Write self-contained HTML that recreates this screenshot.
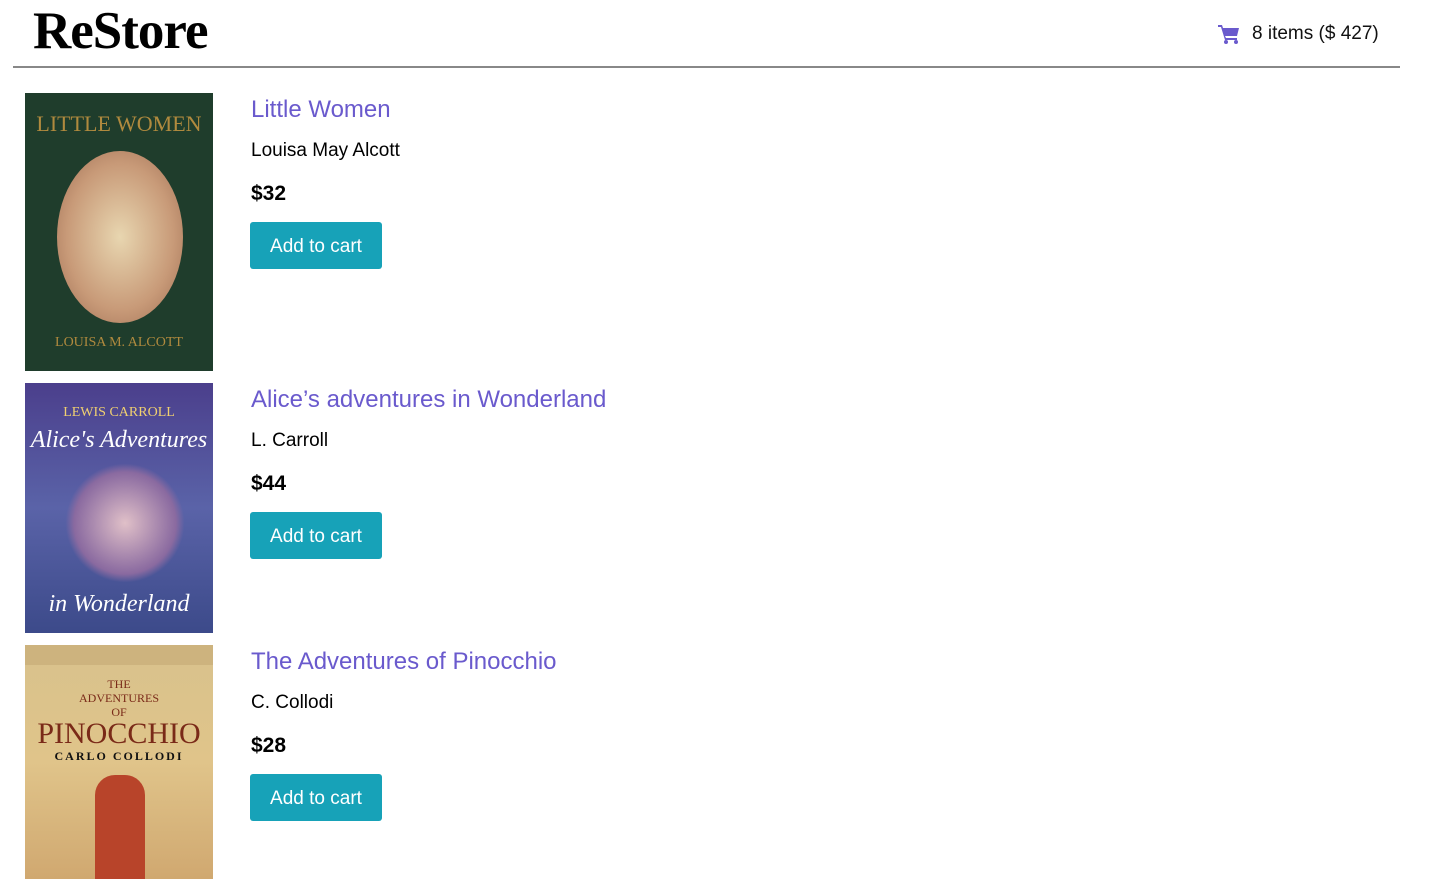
<!DOCTYPE html>
<html><head><style>
body{margin:0;width:1453px;height:879px;overflow:hidden;background:#fff;font-family:"Liberation Sans",sans-serif;position:relative}
.logo{position:absolute;left:33px;top:1px;font-family:"Liberation Serif",serif;font-weight:bold;font-size:53px;letter-spacing:-1px;color:#000}
.hr{position:absolute;left:13px;top:66px;width:1387px;height:2px;background:#888}
.cart{position:absolute;left:1218px;top:23px;font-size:19px;color:#111;display:flex;align-items:center}
.cart svg{margin-right:12px}
.cover{position:absolute;left:25px;width:188px;overflow:hidden}
.t{position:absolute;left:251px;font-size:24px;color:#6a5acd}
.a{position:absolute;left:251px;font-size:19px;color:#000}
.p{position:absolute;left:251px;font-size:21px;font-weight:bold;color:#000}
.b{position:absolute;left:250px;width:132px;height:47px;background:#17a2b8;color:#fff;border-radius:3px;font-size:19px;display:flex;align-items:center;justify-content:center;padding-top:2px;box-sizing:border-box}
.ct{position:absolute;width:100%;text-align:center;font-family:"Liberation Serif",serif}
</style></head><body>
<div class="logo">ReStore</div>
<div class="cart"><svg width="22" height="20" viewBox="0 0 22 20"><path d="M0 1h4l1 3h16l-2 8H7l1 2h11v2H7L3 3H0z" fill="#6a5acd"/><circle cx="8" cy="18" r="2" fill="#6a5acd"/><circle cx="18" cy="18" r="2" fill="#6a5acd"/></svg>8 items ($ 427)</div>
<div class="hr"></div>

<div class="cover" style="top:93px;height:278px;background:#1f3d2c">
<div class="ct" style="top:18px;color:#b08a3e;font-size:22px">LITTLE WOMEN</div>
<div style="position:absolute;left:32px;top:58px;width:126px;height:172px;border-radius:50%;background:radial-gradient(#e8d6b0,#c89a78 60%,#9a6a50)"></div>
<div class="ct" style="top:242px;color:#b08a3e;font-size:14px">LOUISA M. ALCOTT</div>
</div>
<div class="t" style="top:96px">Little Women</div>
<div class="a" style="top:140px">Louisa May Alcott</div>
<div class="p" style="top:182px">$32</div>
<div class="b" style="top:222px">Add to cart</div>

<div class="cover" style="top:383px;height:250px;background:linear-gradient(#4b3f8c,#5a63a8 50%,#3c4a8a)">
<div class="ct" style="top:22px;color:#f0d070;font-size:14px">LEWIS CARROLL</div>
<div class="ct" style="top:44px;color:#fff;font-size:24px;font-style:italic">Alice's Adventures</div>
<div style="position:absolute;left:40px;top:80px;width:120px;height:120px;background:radial-gradient(#e0c0c8,#8a6aa0 60%,transparent 70%)"></div>
<div class="ct" style="top:208px;color:#fff;font-size:24px;font-style:italic">in Wonderland</div>
</div>
<div class="t" style="top:386px">Alice’s adventures in Wonderland</div>
<div class="a" style="top:430px">L. Carroll</div>
<div class="p" style="top:472px">$44</div>
<div class="b" style="top:512px">Add to cart</div>

<div class="cover" style="top:645px;height:234px;background:linear-gradient(#d8c28c,#e0c48a 50%,#d0a870)">
<div style="position:absolute;left:0;top:0;width:188px;height:20px;background:#cdb37e"></div>
<div class="ct" style="top:32px;color:#7a2a18;font-size:12px;line-height:14px">THE<br>ADVENTURES<br>OF</div>
<div class="ct" style="top:72px;color:#7a2a18;font-size:30px">PINOCCHIO</div>
<div class="ct" style="top:104px;color:#111;font-size:12px;font-weight:bold;letter-spacing:2px">CARLO COLLODI</div>
<div style="position:absolute;left:70px;top:130px;width:50px;height:104px;background:#b8442a;border-radius:20px 20px 0 0"></div>
</div>
<div class="t" style="top:648px">The Adventures of Pinocchio</div>
<div class="a" style="top:692px">C. Collodi</div>
<div class="p" style="top:734px">$28</div>
<div class="b" style="top:774px">Add to cart</div>
</body></html>
